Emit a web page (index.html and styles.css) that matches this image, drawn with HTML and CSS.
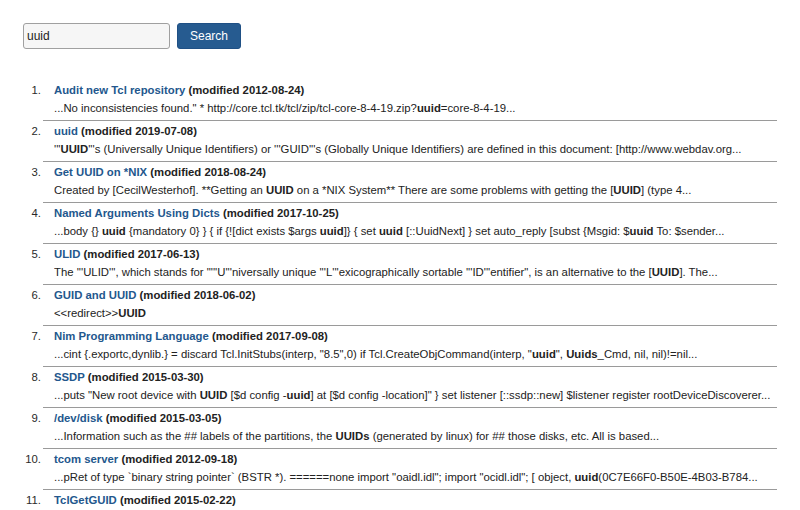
FILE: index.html
```html
<!DOCTYPE html>
<html>
<head>
<meta charset="utf-8">
<link rel="stylesheet" href="styles.css">
</head>
<body>
<form class="search">
  <input class="search-input" type="text" value="uuid">
  <button class="search-btn" type="button">Search</button>
</form>
<ol class="results">
  <li class="item"><span class="num">1.</span><div class="body"><div class="title"><a href="#">Audit new Tcl repository</a> (modified 2012-08-24)</div><div class="snip">...No inconsistencies found." * http://core.tcl.tk/tcl/zip/tcl-core-8-4-19.zip?<b>uuid</b>=core-8-4-19...</div></div></li>
  <li class="item"><span class="num">2.</span><div class="body"><div class="title"><a href="#">uuid</a> (modified 2019-07-08)</div><div class="snip">'''<b>UUID</b>'''s (Universally Unique Identifiers) or '''GUID'''s (Globally Unique Identifiers) are defined in this document: [http://www.webdav.org...</div></div></li>
  <li class="item"><span class="num">3.</span><div class="body"><div class="title"><a href="#">Get UUID on *NIX</a> (modified 2018-08-24)</div><div class="snip">Created by [CecilWesterhof]. **Getting an <b>UUID</b> on a *NIX System** There are some problems with getting the [<b>UUID</b>] (type 4...</div></div></li>
  <li class="item"><span class="num">4.</span><div class="body"><div class="title"><a href="#">Named Arguments Using Dicts</a> (modified 2017-10-25)</div><div class="snip">...body {} <b>uuid</b> {mandatory 0} } { if {![dict exists $args <b>uuid</b>]} { set <b>uuid</b> [::UuidNext] } set auto_reply [subst {Msgid: $<b>uuid</b> To: $sender...</div></div></li>
  <li class="item"><span class="num">5.</span><div class="body"><div class="title"><a href="#">ULID</a> (modified 2017-06-13)</div><div class="snip">The '''ULID''', which stands for "'''U'''niversally unique '''L'''exicographically sortable '''ID'''entifier", is an alternative to the [<b>UUID</b>]. The...</div></div></li>
  <li class="item"><span class="num">6.</span><div class="body"><div class="title"><a href="#">GUID and UUID</a> (modified 2018-06-02)</div><div class="snip">&lt;&lt;redirect&gt;&gt;<b>UUID</b></div></div></li>
  <li class="item"><span class="num">7.</span><div class="body"><div class="title"><a href="#">Nim Programming Language</a> (modified 2017-09-08)</div><div class="snip">...cint {.exportc,dynlib.} = discard Tcl.InitStubs(interp, "8.5",0) if Tcl.CreateObjCommand(interp, "<b>uuid</b>", <b>Uuids</b>_Cmd, nil, nil)!=nil...</div></div></li>
  <li class="item"><span class="num">8.</span><div class="body"><div class="title"><a href="#">SSDP</a> (modified 2015-03-30)</div><div class="snip">...puts "New root device with <b>UUID</b> [$d config -<b>uuid</b>] at [$d config -location]" } set listener [::ssdp::new] $listener register rootDeviceDiscoverer...</div></div></li>
  <li class="item"><span class="num">9.</span><div class="body"><div class="title"><a href="#">/dev/disk</a> (modified 2015-03-05)</div><div class="snip">...Information such as the ## labels of the partitions, the <b>UUIDs</b> (generated by linux) for ## those disks, etc. All is based...</div></div></li>
  <li class="item"><span class="num">10.</span><div class="body"><div class="title"><a href="#">tcom server</a> (modified 2012-09-18)</div><div class="snip">...pRet of type `binary string pointer` (BSTR *). ======none import "oaidl.idl"; import "ocidl.idl"; [ object, <b>uuid</b>(0C7E66F0-B50E-4B03-B784...</div></div></li>
  <li class="item"><span class="num">11.</span><div class="body"><div class="title"><a href="#">TclGetGUID</a> (modified 2015-02-22)</div></div></li>
</ol>
</body>
</html>
```

FILE: styles.css
```css
html, body {
  margin: 0;
  padding: 0;
  background: #fff;
}
body {
  font-family: "Liberation Sans", Arial, sans-serif;
  font-size: 11.33px;
  color: #222;
  padding: 23px 0 0 23px;
}
.search {
  display: flex;
  gap: 7px;
  margin: 0;
}
.search-input {
  box-sizing: border-box;
  width: 147px;
  height: 26px;
  border: 1px solid #a0a0a0;
  border-radius: 3px;
  background: #f6f6f6;
  padding: 0 3px;
  font-family: "Liberation Sans", Arial, sans-serif;
  font-size: 12px;
  color: #222;
}
.search-btn {
  box-sizing: border-box;
  width: 64px;
  height: 26px;
  border: 1px solid #1f5085;
  border-radius: 3px;
  background: #265b90;
  color: #fff;
  font-family: "Liberation Sans", Arial, sans-serif;
  font-size: 12px;
  padding: 0;
}
.results {
  list-style: none;
  margin: 32px 0 0 0;
  padding: 0;
  width: 754px;
}
.item {
  display: flex;
}
.num {
  width: 18px;
  flex: none;
  text-align: right;
  line-height: 18px;
  color: #2a2a2a;
}
.body {
  flex: 1;
  margin-left: 2px;
  margin-bottom: 1px;
  padding: 0 0 3px 11px;
  border-bottom: 1px solid #9a9a9a;
}
.title {
  font-weight: bold;
  line-height: 18px;
  white-space: nowrap;
}
.title a {
  color: #23578d;
  text-decoration: none;
}
.snip {
  line-height: 18px;
  white-space: nowrap;
  overflow: hidden;
}
.snip b {
  font-weight: bold;
}
```
